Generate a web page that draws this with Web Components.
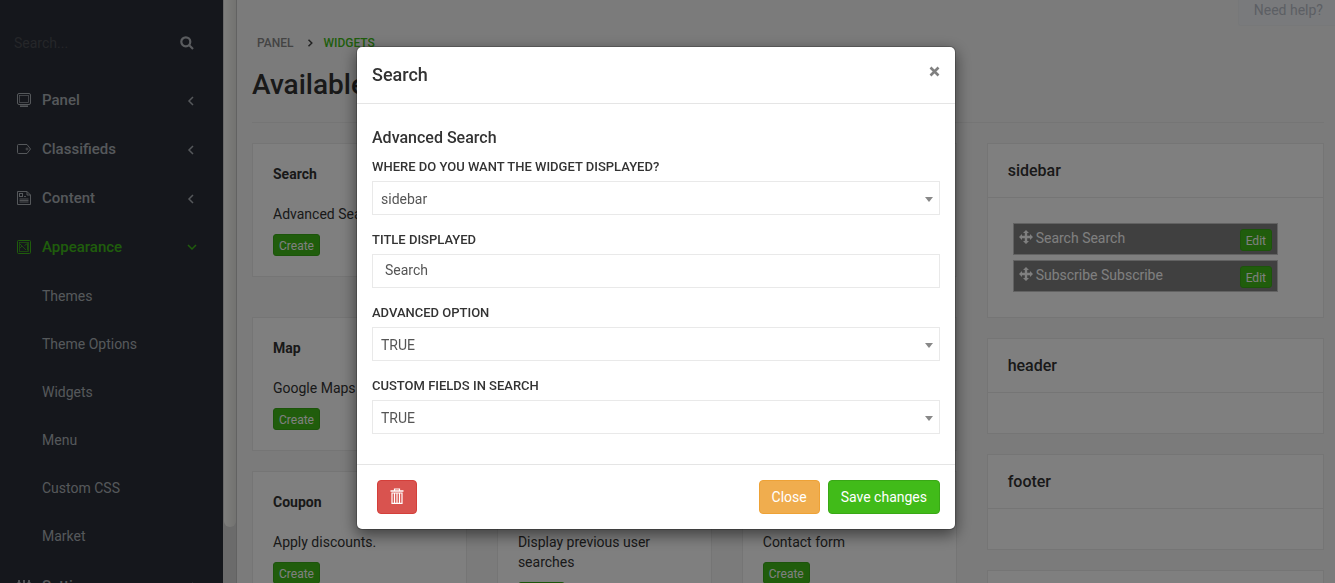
<!DOCTYPE html>
<html lang="en">
<head>
<meta charset="utf-8">
<meta name="viewport" content="width=device-width, initial-scale=1">
<title>Widgets</title>
<style>
  body { margin: 0; height: 100vh; overflow: hidden; font: 14px/20px Roboto, "Liberation Sans", sans-serif; color: #333; }
</style>
</head>
<body>
<widgets-page></widgets-page>
<script>
const define = (name, html, setup) => {
  const template = document.createElement('template');
  template.innerHTML = '<style>*{box-sizing:border-box}</style>' + html;
  customElements.define(name, class extends HTMLElement {
    connectedCallback() {
      if (this.shadowRoot) return;
      const root = this.attachShadow({ mode: 'open' });
      root.append(template.content.cloneNode(true));
      if (setup) setup(this, root);
    }
  });
};

const icons = {
  monitor: '<rect x="1.500" y="1.500" width="13" height="11" rx="1.500"/><rect x="3.500" y="3.500" width="9" height="7" stroke-width=".7"/><path d="M4 14.200h8" stroke-width="1.500"/>',
  tag: '<path d="M2.500 3.500h8.500l3.500 4.500-3.500 4.500h-8.500q-1 0-1-1v-7q0-1 1-1z"/><circle cx="11" cy="8" r="1" stroke-width=".8"/>',
  news: '<path d="M11 1.500h-9.500v13h13v-9.500zM11 1.500v3.500h3.500"/><rect x="3.500" y="3.500" width="3" height="3"/><path d="M8 6.500h2M3.500 9h9M3.500 10.500h9M3.500 12h9" stroke-width=".9"/>',
  image: '<rect x="1.500" y="1.500" width="13" height="13" rx="1"/><rect x="3.500" y="3.500" width="9" height="9" stroke-width=".7"/><path d="M4 5l6 6M4 9l2-2M8.500 6.500l3-2M11.500 4.500v7" stroke-width=".8"/>',
  sliders: '<path d="M3 2v12M8 2v12M13 2v12M1.500 5h3M6.500 9h3M11.500 5h3" stroke-width="1.800"/>'
};

define('nav-item', `
<style>
  :host { display: block; color: #abb1b7; font-size: 15px; font-weight: 500; }
  :host([open]) { color: #3fba18; }
  a { display: flex; align-items: center; height: 49px; padding: 0 26px 0 16px; color: inherit; text-decoration: none; }
  .icon { width: 16px; height: 16px; margin-right: 10px; fill: none; stroke: currentColor; }
  .label { flex: 1; }
  .arrow { width: 12px; height: 12px; fill: none; stroke: currentColor; stroke-width: 1.5; }
  :host([open]) .arrow { transform: rotate(-90deg); }
  nav { padding: 1px 0; }
</style>
<a href="#"><svg class="icon" viewBox="0 0 16 16" aria-hidden="true"></svg><span class="label"></span>
<svg class="arrow" viewBox="0 0 12 12" aria-hidden="true"><path d="M8 3l-4 4 4 4"/></svg></a>
<nav><slot></slot></nav>`, (el, root) => {
  root.querySelector('.icon').innerHTML = icons[el.getAttribute('icon')];
  root.querySelector('.label').textContent = el.getAttribute('label');
  if (!el.hasAttribute('open')) root.querySelector('nav').remove();
});

define('sub-link', `
<style>
  :host { display: block; font-size: 14px; font-weight: 400; color: #abb1b7; }
  a { display: block; line-height: 48px; padding-left: 42px; color: inherit; text-decoration: none; }
</style>
<a href="#"><slot></slot></a>`);

define('side-bar', `
<style>
  :host { display: flex; height: 100vh; overflow: hidden; }
  .menu { width: 223px; background: #2b2e38; overflow: hidden; }
  form { display: flex; align-items: center; justify-content: space-between; padding: 28px 29px 17px 14px; }
  input { width: 140px; height: 30px; padding: 0; border: 0; outline: 0; background: none; font: inherit; color: #abb1b7; }
  input::placeholder { color: #4a4d53; opacity: 1; }
  form button { display: flex; border: 0; padding: 0; background: none; color: #b4b9be; }
  form svg { width: 14px; height: 14px; fill: none; stroke: currentColor; stroke-width: 2.2; }
  .track { width: 14px; background: #d6d6d6; border-right: 1px solid #c4c4c4; padding-left: 1px; }
  .thumb { height: calc(100vh - 56px); border-radius: 0 0 6px 6px; background: linear-gradient(90deg, #fdfdfa, #e6e6e2); }
</style>
<div class="menu">
  <form role="search"><input type="text" placeholder="Search..." aria-label="Search"><button type="button" aria-label="Run search"><svg viewBox="0 0 14 14"><circle cx="5.800" cy="5.800" r="4.500"/><path d="M9 9l4 4"/></svg></button></form>
  <nav-item icon="monitor" label="Panel"></nav-item>
  <nav-item icon="tag" label="Classifieds"></nav-item>
  <nav-item icon="news" label="Content"></nav-item>
  <nav-item icon="image" label="Appearance" open>
    <sub-link>Themes</sub-link><sub-link>Theme Options</sub-link><sub-link>Widgets</sub-link>
    <sub-link>Menu</sub-link><sub-link>Custom CSS</sub-link><sub-link>Market</sub-link>
  </nav-item>
  <nav-item icon="sliders" label="Settings"></nav-item>
</div>
<div class="track"><div class="thumb"></div></div>`);

define('ui-button', `
<style>
  :host { display: inline-block; }
  button { display: flex; align-items: center; justify-content: center; height: 34px; padding: 0 12px; border: 1px solid #39a816; border-radius: 4px; background: #41bb19; color: #fff; font: inherit; }
  :host([small]) button { height: 22px; padding: 1px 5px 0; font-size: 12px; border-radius: 3px; }
  :host([kind=warning]) button { background: #f0ad4e; border-color: #eea236; }
  :host([kind=danger]) button { background: #d9534f; border-color: #d43f3a; }
</style>
<button type="button"><slot></slot></button>`, (el, root) => {
  if (el.hasAttribute('label')) root.querySelector('button').setAttribute('aria-label', el.getAttribute('label'));
});

define('widget-card', `
<style>
  :host { display: block; padding: 20px; background: #fff; border: 1px solid #ebebeb; min-height: 134px; }
  :host([tall]) { min-height: 154px; }
  h4 { margin: 0 0 20px; min-height: 20px; font: inherit; font-weight: 700; }
  p { margin: 0 0 10px; }
</style>
<h4></h4><p><slot></slot></p><ui-button small>Create</ui-button>`, (el, root) => {
  root.querySelector('h4').textContent = el.getAttribute('heading') || '';
  if (!el.textContent.trim()) root.querySelectorAll('h4, p, ui-button').forEach(n => n.remove());
});

define('position-panel', `
<style>
  :host { display: block; background: #fff; border: 1px solid #ebebeb; }
  h3 { margin: 0; padding: 17px 20px 16px; border-bottom: 1px solid #ebebeb; font: inherit; font-size: 16px; font-weight: 500; }
  .body { padding: 20px; }
</style>
<h3></h3><div class="body"><slot></slot></div>`, (el, root) => {
  root.querySelector('h3').textContent = el.getAttribute('heading');
});

define('placed-widget', `
<style>
  :host { display: flex; align-items: flex-start; margin: 5px 25px 5px 5px; padding: 5px 5px 3px; border: 1px solid #c4c4c4; background: #808080; color: #fff; }
  svg { width: 14px; height: 14px; margin: 1px 3px 0 0; fill: currentColor; }
  span { flex: 1; margin-top: -1px; }
</style>
<svg viewBox="0 0 14 14" aria-hidden="true"><path d="M7 0l3 3H8.200v2.800H11V4l3 3-3 3V8.200H8.200V11H10l-3 3-3-3h1.800V8.200H3V10L0 7l3-3v1.800h2.800V3H4z"/></svg>
<span><slot></slot></span><ui-button small>Edit</ui-button>`);

define('page-content', `
<style>
  :host { display: block; flex: 1; min-width: 0; height: 100vh; overflow: hidden; background: #f7f7f7; }
  .help { display: flex; justify-content: flex-end; height: 33px; align-items: flex-start; }
  .help a { padding: 0 12px 5px 15px; border: solid #eef0f3; border-width: 0 0 1px 1px; border-bottom-left-radius: 3px; background: #f3f5f9; color: #b9bec8; text-decoration: none; }
  .inner { padding: 0 11px 0 15px; }
  ol { display: flex; align-items: center; margin: 0; padding: 0 5px; list-style: none; font-size: 12px; font-weight: 500; text-transform: uppercase; }
  ol a { color: #888; text-decoration: none; }
  ol svg { display: block; width: 8px; height: 8px; margin: 0 10px 0 12px; fill: none; stroke: #444; stroke-width: 1.5; }
  ol [aria-current] { color: #41bb19; }
  h1 { margin: 0; padding: 14px 0 19px; font: inherit; font-size: 28px; line-height: 36px; font-weight: 500; border-bottom: 1px solid #ebebeb; }
  .layout { display: grid; grid-template-columns: repeat(12, 1fr); gap: 30px; margin-top: 20px; align-items: start; }
  .cards { grid-column: span 8; display: grid; grid-template-columns: repeat(3, 1fr); gap: 20px 30px; align-items: start; }
  .positions { grid-column: span 4; display: flex; flex-direction: column; gap: 20px; }
</style>
<div class="help"><a href="#">Need help?</a></div>
<main class="inner">
  <ol><li><a href="#">Panel</a></li><li><svg viewBox="0 0 8 8" aria-hidden="true"><path d="M2.500 .8L5.800 4 2.500 7.200"/></svg></li><li aria-current="page">Widgets</li></ol>
  <h1>Available</h1>
  <div class="layout">
    <section class="cards">
      <widget-card heading="Search">Advanced Search</widget-card><widget-card tall></widget-card><widget-card></widget-card>
      <widget-card heading="Map">Google Maps</widget-card><widget-card></widget-card><widget-card></widget-card>
      <widget-card heading="Coupon">Apply discounts.</widget-card><widget-card>Display previous user searches</widget-card><widget-card>Contact form</widget-card>
    </section>
    <section class="positions">
      <position-panel heading="sidebar"><placed-widget>Search Search</placed-widget><placed-widget>Subscribe Subscribe</placed-widget></position-panel>
      <position-panel heading="header"></position-panel>
      <position-panel heading="footer"></position-panel>
      <position-panel heading=""></position-panel>
    </section>
  </div>
</main>`);

define('form-field', `
<style>
  :host { display: block; margin-bottom: 15px; }
  label { display: block; margin-bottom: 5px; font-size: 13px; line-height: 19px; font-weight: 500; text-transform: uppercase; }
  .box { display: grid; align-items: center; }
  .box > * { grid-area: 1 / 1; }
  input, select { appearance: none; width: 100%; height: 34px; margin: 0; padding: 0 12px 2px; border: 1px solid #e9e9e9; border-radius: 0; background: #fff; color: #555; font: inherit; outline: 0; }
  select { padding: 1px 24px 0 8px; }
  svg { justify-self: end; width: 8px; height: 5px; margin: 3px 7px 0 0; fill: #888; pointer-events: none; }
</style>
<label for="control"></label><div class="box"></div>`, (el, root) => {
  root.querySelector('label').textContent = el.getAttribute('label');
  const value = el.getAttribute('value');
  root.querySelector('.box').innerHTML = el.getAttribute('type') === 'text'
    ? `<input id="control" type="text" value="${value}">`
    : `<select id="control"><option>${value}</option></select><svg viewBox="0 0 8 5" aria-hidden="true"><path d="M0 0h8L4 5z"/></svg>`;
});

define('modal-dialog', `
<style>
  :host { position: fixed; inset: 0; display: flex; justify-content: center; align-items: flex-start; padding: 46px 23px 0 0; background: rgba(0,0,0,.5); }
  .dialog { width: 100%; max-width: 600px; border: 1px solid rgba(0,0,0,.2); border-radius: 6px; background: #fff; background-clip: padding-box; box-shadow: 0 5px 15px rgba(0,0,0,.5); }
  header { display: flex; justify-content: space-between; align-items: flex-start; padding: 15px; border-bottom: 1px solid #e5e5e5; }
  h2 { margin: 0; font: inherit; font-size: 18px; line-height: 26px; font-weight: 500; }
  header button { display: flex; margin: 4px 0 0; padding: 0; border: 0; background: none; color: #808080; }
  header svg { width: 11px; height: 11px; fill: none; stroke: currentColor; stroke-width: 2.6; }
  .body { padding: 15px; }
  footer { display: flex; gap: 8px; padding: 15px 15px 15px 20px; border-top: 1px solid #e5e5e5; }
  footer slot { display: flex; gap: 8px; width: 100%; }
</style>
<div class="dialog" role="dialog" aria-modal="true" aria-labelledby="title">
  <header><h2 id="title"></h2><button type="button" aria-label="Close dialog"><svg viewBox="0 0 11 11"><path d="M1.500 1.500l8 8M9.500 1.500l-8 8"/></svg></button></header>
  <div class="body"><slot></slot></div>
  <footer><slot name="actions"></slot></footer>
</div>`, (el, root) => {
  root.querySelector('h2').textContent = el.getAttribute('heading');
});

define('widgets-page', `
<style>
  :host { display: flex; height: 100vh; }
  h3 { margin: 0 0 9px; padding-top: 9px; font: inherit; font-size: 16px; font-weight: 500; }
  .delete { margin-right: auto; }
  .delete svg { width: 14px; height: 16px; margin-bottom: 2px; fill: none; stroke: currentColor; }
</style>
<side-bar></side-bar>
<page-content></page-content>
<modal-dialog heading="Search">
  <h3>Advanced Search</h3>
  <form-field label="Where do you want the widget displayed?" type="select" value="sidebar"></form-field>
  <form-field label="Title displayed" type="text" value="Search"></form-field>
  <form-field label="Advanced option" type="select" value="TRUE"></form-field>
  <form-field label="Custom fields in search" type="select" value="TRUE"></form-field>
  <ui-button slot="actions" class="delete" kind="danger" label="Delete"><svg viewBox="0 0 14 16" aria-hidden="true"><path d="M.5 3h13" stroke-width="1.500"/><path d="M4.500 3V1h5v2M2 5v10.300h10V5zM4.500 5v10M7 5v10M9.500 5v10" stroke-width="1.200"/></svg></ui-button>
  <ui-button slot="actions" kind="warning">Close</ui-button>
  <ui-button slot="actions">Save changes</ui-button>
</modal-dialog>`);
</script>
</body>
</html>
